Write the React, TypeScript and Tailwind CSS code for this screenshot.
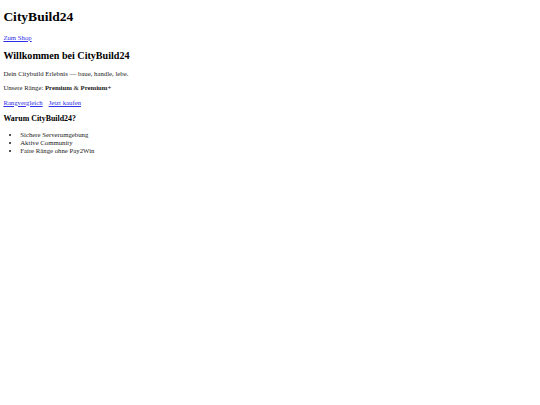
export default function App() {
  return (
    <div className="min-h-[405px] bg-white px-[3.375px] pb-[3.375px] font-['Liberation_Serif','Times_New_Roman',serif] text-[6.75px] leading-[1.15] text-[#1a1a1a]">
      <h1 className="my-[9.05px] text-[13.5px] font-bold text-black">CityBuild24</h1>
      <p className="my-[6.75px]">
        <a href="#" className="text-[#3030e8] underline">
          Zum Shop
        </a>
      </p>

      <h2 className="my-[8.4px] text-[10.125px] font-bold text-black">Willkommen bei CityBuild24</h2>
      <p className="my-[6.75px]">Dein Citybuild Erlebnis — baue, handle, lebe.</p>
      <p className="my-[6.75px]">
        Unsere Ränge: <strong className="font-bold">Premium</strong> &amp;{' '}
        <strong className="font-bold">Premium+</strong>
      </p>
      <p className="my-[6.75px]">
        <a href="#" className="mr-[6px] text-[#3030e8] underline">
          Rangvergleich
        </a>
        <a href="#" className="text-[#3030e8] underline">
          Jetzt kaufen
        </a>
      </p>

      <h3 className="my-[7.9px] text-[7.9px] font-bold text-black">Warum CityBuild24?</h3>
      <ul className="my-[6.75px] list-disc pl-[16.875px]">
        <li>Sichere Serverumgebung</li>
        <li>Aktive Community</li>
        <li>Faire Ränge ohne Pay2Win</li>
      </ul>
    </div>
  )
}
